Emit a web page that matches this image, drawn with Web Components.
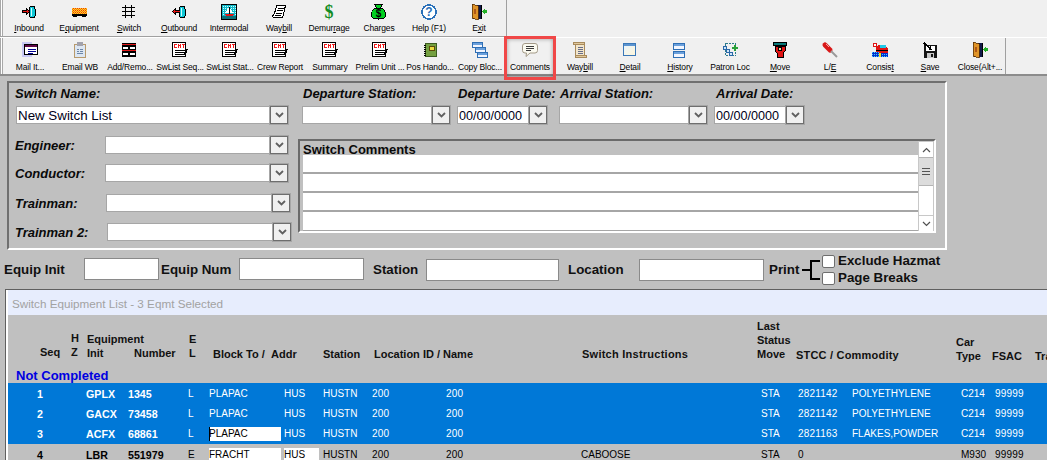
<!DOCTYPE html>
<html>
<head>
<meta charset="utf-8">
<title>Switch List</title>
<style>
  html, body { margin: 0; height: 460px; overflow: hidden; background: #c0c0c0; }
  body { font-family: "Liberation Sans", Arial, sans-serif; color: #000; display: flex; flex-direction: column; position: relative; }
</style>
</head>
<body>
<tool-strip end="507" start="4" height="37">
  <tool-button icon="inbound" label="&amp;Inbound"></tool-button>
  <tool-button icon="equipment" label="E&amp;quipment"></tool-button>
  <tool-button icon="switch" label="&amp;Switch"></tool-button>
  <tool-button icon="outbound" label="&amp;Outbound"></tool-button>
  <tool-button icon="intermodal" label="Intermodal"></tool-button>
  <tool-button icon="scrawl" label="Way&amp;bill"></tool-button>
  <tool-button icon="dollar" label="Demur&amp;rage"></tool-button>
  <tool-button icon="bag" label="Char&amp;ges"></tool-button>
  <tool-button icon="help" label="Help (F1)"></tool-button>
  <tool-button icon="door" label="E&amp;xit"></tool-button>
</tool-strip>
<tool-strip end="1006" start="5" height="39" second>
  <tool-button icon="mail" label="Mail It..."></tool-button>
  <tool-button icon="clip" label="Email WB"></tool-button>
  <tool-button icon="bricks" label="Add/Remo..."></tool-button>
  <tool-button icon="report" label="SwList Seq..."></tool-button>
  <tool-button icon="report" label="SwList Stat..."></tool-button>
  <tool-button icon="report" label="Crew Report"></tool-button>
  <tool-button icon="report" label="Summary"></tool-button>
  <tool-button icon="report" label="Prelim Unit ..."></tool-button>
  <tool-button icon="book" label="Pos Hando..."></tool-button>
  <tool-button icon="copy" label="Copy Bloc..."></tool-button>
  <tool-button icon="bubble" label="Comments"></tool-button>
  <tool-button icon="scroll" label="Way&amp;bill"></tool-button>
  <tool-button icon="detail" label="&amp;Detail"></tool-button>
  <tool-button icon="history" label="&amp;History"></tool-button>
  <tool-button icon="patron" label="Patron Loc"></tool-button>
  <tool-button icon="move" label="&amp;Move"></tool-button>
  <tool-button icon="driver" label="L/&amp;E"></tool-button>
  <tool-button icon="train" label="Consis&amp;t"></tool-button>
  <tool-button icon="save" label="&amp;Save"></tool-button>
  <tool-button icon="door" label="Close(Alt+..."></tool-button>
</tool-strip>
<mark-box></mark-box>
<switch-form></switch-form>
<filter-row></filter-row>
<equipment-list></equipment-list>

<script>
const win = (x, y, w, h, bar) => `<rect x="${x}.5" y="${y}.5" width="${w}" height="${h}" fill="#f2f6ff" stroke="#2f6fb5"/><rect x="${x + 1}" y="${y + 1}" width="${w - 1}" height="${bar}" fill="#6aa0dc"/>`
const door = `<rect x="2" y="1" width="9" height="14" fill="#101848"/><rect x="10" y="1" width="1" height="14" fill="#000"/><path d="M1 0l6 2v14l-6-2z" fill="#e09428" stroke="#5a3208" stroke-width=".8"/><rect x="3" y="5" width="2" height="5" fill="#b05818"/><path d="M11 7l3-3v2h2v3h-2v2z" fill="#24b028"/>`
const report = `<rect x="0.5" y="0.5" width="13" height="14" fill="#fff" stroke="#000"/><path d="M2 2h3v1H3v2h2v1H2zM6 2h1v4H6zM8 2h1v4H8zM6 3h3v1H6zM10 2h3v1h-1v3h-1V3h-1z" fill="#f01818"/><rect x="3" y="8" width="12" height="1" fill="#000"/><rect x="3" y="10" width="12" height="1" fill="#000"/><rect x="3" y="12" width="10" height="1" fill="#000"/><rect x="14" y="7" width="2" height="1" fill="#000"/><rect x="13" y="9" width="2" height="1" fill="#000"/><rect x="12" y="11" width="2" height="1" fill="#000"/>`

const ICONS = {
  inbound: `<rect x="8.5" y="2.5" width="5.5" height="11" rx="2" fill="#10c8d8" stroke="#000"/><rect x="10" y="4" width="1" height="8" fill="#c8ffff"/><path d="M1 6h4V4l4 3.5L5 11V9H1z" fill="#000"/><path d="M2 7h4V6l2 1.5L6 9V8H2z" fill="#e41414"/>`,
  outbound: `<rect x="8.5" y="2.5" width="5.5" height="11" rx="2" fill="#10c8d8" stroke="#000"/><rect x="10" y="4" width="1" height="8" fill="#c8ffff"/><path d="M9 6H5V4L1 7.5 5 11V9h4z" fill="#000"/><path d="M9 7H4V6L2 7.5 4 9V8h5z" fill="#e41414"/>`,
  equipment: `<defs><pattern id="ck" width="2" height="2" patternUnits="userSpaceOnUse"><rect width="2" height="2" fill="#ffd820"/><rect width="1" height="1" fill="#f03010"/><rect x="1" y="1" width="1" height="1" fill="#f07010"/></pattern></defs><rect x="1" y="4" width="15" height="6" fill="url(#ck)"/><rect x="1" y="10" width="15" height="1.5" fill="#000"/><rect x="2" y="11" width="4" height="2" fill="#000"/><rect x="11" y="11" width="4" height="2" fill="#000"/>`,
  switch: `<path d="M4.5 1v13M10.5 1v13M1 3.500h13M1 7.500h13M1 11.500h13" stroke="#000" fill="none"/>`,
  intermodal: `<defs><pattern id="dt" width="2" height="2" patternUnits="userSpaceOnUse"><rect width="2" height="2" fill="#10b8c8"/><rect width="1" height="1" fill="#c8ffff"/></pattern></defs><rect x=".5" y=".5" width="15" height="15" fill="url(#dt)" stroke="#000"/><path d="M8 3l4 6H4z" fill="#fff"/><rect x="8" y="3" width="1" height="7" fill="#000"/><path d="M3 10h10l-2 2H5z" fill="#e01414"/><rect x="1" y="12" width="14" height="3" fill="#087078"/>`,
  scrawl: `<path d="M6 1.500h8.500l-2 8.500-1 3.500H2.500L1.500 12l2-2.500 1-4z" fill="#fff" stroke="#000" stroke-linejoin="round"/><path d="M6.500 4h6M6 6.500h6M5 9h6M4 11.500h6" stroke="#000" fill="none"/>`,
  dollar: `<text x="8" y="14" text-anchor="middle" font-family="Liberation Serif" font-weight="700" font-size="18" fill="#128c24">$</text>`,
  bag: `<path d="M4 .5h7L9.500 4c3 1 5.500 4 5.500 7 0 3-2 4-7.500 4S0 14 0 11c0-3 2.500-6 5.500-7z" fill="#00d020" stroke="#000"/><rect x="5" y="3.500" width="5" height="1" fill="#000"/><text x="7.500" y="13" text-anchor="middle" font-family="Liberation Sans" font-weight="700" font-size="10" fill="#000">$</text>`,
  help: `<circle cx="8" cy="8" r="7" fill="#fff" stroke="#2a70b8" stroke-width="1.700"/><text x="8" y="12.200" text-anchor="middle" font-family="Liberation Sans" font-weight="700" font-size="12" fill="#2a70b8">?</text>`,
  door,
  mail: `<rect x="0" y="0" width="10" height="15" fill="#c8c8f4"/><rect x="2.500" y="2.500" width="13" height="10" fill="#fff" stroke="#000"/><rect x="3" y="3" width="12" height="2" fill="#600848"/><rect x="6" y="7" width="8" height="1" fill="#000090"/><rect x="6" y="9" width="8" height="1" fill="#000090"/><rect x="6" y="11" width="5" height="1" fill="#000090"/>`,
  clip: `<rect x="2.500" y="2.500" width="11" height="13" rx="1" fill="#dce6f2" stroke="#b89a6c"/><rect x="5" y="0" width="6" height="4" fill="#a2a2ac"/><rect x="5" y="7" width="2" height="1" fill="#6c86a8"/><rect x="8" y="7" width="3" height="1" fill="#6c86a8"/><rect x="5" y="9" width="2" height="1" fill="#6c86a8"/><rect x="8" y="9" width="3" height="1" fill="#6c86a8"/><rect x="5" y="11" width="6" height="1" fill="#6c86a8"/>`,
  bricks: `<rect x="0" y="1" width="14" height="14" fill="#000"/><rect x="0" y="2" width="14" height="1" fill="#e01818"/><rect x="1" y="5" width="5" height="2" fill="#fff"/><rect x="8" y="5" width="5" height="2" fill="#fff"/><rect x="0" y="8" width="14" height="1" fill="#e01818"/><rect x="1" y="11" width="5" height="2" fill="#fff"/><rect x="8" y="11" width="5" height="2" fill="#fff"/>`,
  report,
  book: `<rect x="3.500" y="1.500" width="11" height="13" fill="#74a040" stroke="#3c5c20"/><path d="M2 3h2M2 5h2M2 7h2M2 9h2M2 11h2M2 13h2" stroke="#000"/><rect x="7.500" y="4.500" width="5" height="4" fill="#ecdc40" stroke="#5c4a08"/>`,
  copy: win(0, 0, 10, 5, 2) + win(3, 5, 10, 5, 2) + win(5, 10, 10, 5, 2),
  bubble: `<path d="M3 1.500h10q2.500 0 2.500 2.500v4.500q0 2.500-2.500 2.500H8l-4 3.500.5-3.500H3Q.5 11 .5 8.500V4Q.5 1.500 3 1.500z" fill="#fbfaf0" stroke="#a39a88" shape-rendering="auto"/><path d="M4 4.500h8M4 6.500h8M4 8.500h5" stroke="#3c3c3c" fill="none"/>`,
  scroll: `<rect x="3.500" y="1.500" width="9" height="13" fill="#f2e6cc" stroke="#a88a5c"/><rect x="1.500" y="0.500" width="11" height="2" fill="#e0c89c" stroke="#a88a5c"/><rect x="3.500" y="13.500" width="11" height="2" fill="#e0c89c" stroke="#a88a5c"/><path d="M6 5h5M6 7h5M6 9h5M6 11h5" stroke="#666c88" fill="none"/>`,
  detail: `<defs><linearGradient id="dg" x1="0" y1="0" x2="1" y2="1"><stop offset="0" stop-color="#e8f4ff"/><stop offset="1" stop-color="#fff6d8"/></linearGradient></defs><rect x="1.500" y="1.500" width="12" height="12" fill="url(#dg)" stroke="#3a78b8"/><rect x="2" y="2" width="11" height="2" fill="#5c94d0"/>`,
  history: win(1, 1, 11, 6, 2) + win(1, 9, 11, 6, 2),
  patron: `<rect x="3.500" y="1.500" width="10" height="12" fill="none" stroke="#2c7a8c" stroke-dasharray="2 1"/><rect x="1.500" y="4.500" width="3" height="3" fill="#cfe6f8" stroke="#2a68a8"/><rect x="4.500" y="7.500" width="3" height="3" fill="#cfe6f8" stroke="#2a68a8"/><rect x="7.500" y="10.500" width="3" height="3" fill="#cfe6f8" stroke="#2a68a8"/><path d="M10 5h2V3h2v2h2v2h-2v2h-2V7h-2z" fill="#28a038"/>`,
  move: `<path d="M3 4h10v5l-2 2v4H5v-4L3 9z" fill="#e01414" stroke="#000"/><rect x="1.500" y=".5" width="13" height="3" fill="#087878" stroke="#000"/><circle cx="8" cy="7" r="2" fill="#f8d8a0" stroke="#000"/>`,
  driver: `<path d="M3 3l5 5" stroke="#d81818" stroke-width="5" stroke-linecap="round" shape-rendering="auto"/><path d="M4 2l3 3" stroke="#f8a0a0" shape-rendering="auto"/><path d="M9 9l6 6" stroke="#9a9a9a" stroke-width="2" shape-rendering="auto"/>`,
  train: `<defs><pattern id="tk" width="2" height="2" patternUnits="userSpaceOnUse"><rect width="2" height="2" fill="#0030d0"/><rect width="1" height="1" fill="#40c8ff"/></pattern></defs><rect x="1" y="1" width="3" height="3" fill="#fff" stroke="#e01414"/><path d="M6 3h7l3 4v4H4V6z" fill="#e01414"/><rect x="8" y="3" width="6" height="3" fill="#20c8e8"/><rect x="4" y="8" width="12" height="1" fill="#000"/><rect x="0" y="10" width="7" height="5" fill="url(#tk)"/><rect x="7" y="11" width="2" height="4" fill="#f0e020"/><rect x="9" y="11" width="7" height="4" fill="url(#tk)"/>`,
  save: `<rect x="2" y="3" width="13" height="13" fill="#141414"/><rect x="4" y="4" width="9" height="5" fill="#fff"/><rect x="5" y="11" width="7" height="5" fill="#c8c8c8"/><rect x="9" y="12" width="2" height="3" fill="#141414"/><path d="M2 0l6 5V2l2 6-6-1 3-.5L1 1.500z" fill="#000"/>`
}

// one icon + caption, "&" in the label marks the underlined mnemonic
class ToolButton extends HTMLElement {
  constructor () {
    super()
    this.attachShadow({ mode: 'open' })
  }
  connectedCallback () {
    const label = (this.getAttribute('label') || '').replace(/&(.)/, '<u>$1</u>')
    this.shadowRoot.innerHTML = `
      <style>
        :host { display: flex; flex-direction: column; align-items: center; width: 50px; flex: none; }
        svg { width: 16px; height: 16px; display: block; shape-rendering: crispEdges; overflow: visible; }
        span { font: 8.5px/10px "Liberation Sans", Arial, sans-serif; letter-spacing: -.15px; color: #000; white-space: nowrap; margin-top: var(--cap-gap, 3px); }
        u { text-underline-offset: 1px; }
      </style>
      <svg viewBox="0 0 16 16">${ICONS[this.getAttribute('icon')] || ''}</svg>
      <span>${label}</span>`
  }
}
customElements.define('tool-button', ToolButton)

class ToolStrip extends HTMLElement {
  constructor () {
    super()
    this.attachShadow({ mode: 'open' })
  }
  connectedCallback () {
    const end = this.getAttribute('end')
    const start = this.getAttribute('start') - 0
    const second = this.hasAttribute('second')
    const top = 4
    this.shadowRoot.innerHTML = `
      <style>
        :host { display: block; flex: none; height: ${this.getAttribute('height')}px; background: #f0f0f0; box-sizing: border-box;
          ${second ? 'border-top: 1px solid #fff; border-bottom: 2px solid #8c8c8c;' : ''} }
        .bar { display: flex; width: ${end}px; height: 100%; box-sizing: border-box;
          padding-top: ${top}px; border-right: 1px solid #a0a0a0;
          ${second ? '--cap-gap: 4px;' : 'border-bottom: 1px solid #a0a0a0; --cap-gap: 3px;'} }
        .grip { width: 1px; border-left: 1px solid #a8a8a8; border-right: 1px solid #a8a8a8; margin: -${top}px ${start - 3}px 0 0; flex: none; background: #fff; }
      </style>
      <div class="bar"><div class="grip"></div><slot></slot></div>`
  }
}
customElements.define('tool-strip', ToolStrip)

// red call-out drawn over the Comments button
class MarkBox extends HTMLElement {
  constructor () {
    super()
    this.attachShadow({ mode: 'open' }).innerHTML = `
      <style>
        :host { position: absolute; left: 504px; top: 36px; width: 52px; height: 44px; box-sizing: border-box;
          border: 3px solid #f04848; box-shadow: inset 0 0 4px rgba(0,0,0,.35); pointer-events: none; }
      </style>`
  }
}
customElements.define('mark-box', MarkBox)

class ComboBox extends HTMLElement {
  constructor () {
    super()
    this.attachShadow({ mode: 'open' })
  }
  connectedCallback () {
    const v = this.getAttribute('value') || ''
    this.shadowRoot.innerHTML = `
      <style>
        :host { display: flex; flex: none; height: 18px; width: ${this.getAttribute('width')}px; }
        .val { flex: 1; background: #fff; border: 1px solid #a6a6a6; border-right: 0; box-sizing: border-box; font: ${this.getAttribute('size') || 13.33}px/18px "Liberation Sans", Arial, sans-serif; color: #000018; padding-left: 1px; overflow: hidden; white-space: nowrap; }
        .btn { width: 18px; flex: none; box-sizing: border-box; border: 1px solid #6e6e6e; outline: 1px solid #a6a6a6; background: #f0f0f0; display: flex; align-items: center; justify-content: center; }
        svg { width: 9px; height: 6px; display: block; }
      </style>
      <div class="val">${v}</div>
      <div class="btn"><svg viewBox="0 0 9 6"><path d="M1 1l3.500 3.500L8 1" fill="none" stroke="#606060" stroke-width="1.800"/></svg></div>`
  }
}
customElements.define('combo-box', ComboBox)

class CommentsBox extends HTMLElement {
  constructor () {
    super()
    this.attachShadow({ mode: 'open' }).innerHTML = `
      <style>
        :host { display: flex; flex: none; width: 638px; height: 94px; box-sizing: border-box; margin: 3px 0 0 7px;
          border: 2px solid; border-color: #6a6a6a #fff #fff #6a6a6a; padding-left: 3px; }
        .main { flex: 1; display: flex; flex-direction: column; }
        h4 { margin: 0; font: 700 13px/18px "Liberation Sans", Arial, sans-serif; height: 14px; }
        .line { height: 17px; background: #fff; border-bottom: 2px solid #a6a6a6; }
        .line:last-child { border-bottom: 1px solid #a6a6a6; height: 18px; }
        .bar { width: 16px; flex: none; background: #fff; display: flex; flex-direction: column; box-sizing: border-box; border: 1px solid #c8c8c8; border-bottom: 0;  }
        .arrow { height: 15px; display: flex; align-items: center; justify-content: center; }
        .thumb { height: 27px; background: #dcdcdc; border: 1px solid #b4b4b4; border-width: 1px 0; display: flex; align-items: center; justify-content: center; }
        .track { flex: 1; }
        .down { border-top: 1px solid #c8c8c8; }
        svg { display: block; }
      </style>
      <div class="main">
        <h4>Switch Comments</h4>
        <div class="line"></div><div class="line"></div><div class="line"></div><div class="line"></div>
      </div>
      <div class="bar">
        <div class="arrow"><svg width="9" height="6" viewBox="0 0 9 6"><path d="M1 5l3.500-3.500L8 5" fill="none" stroke="#505050" stroke-width="1.200"/></svg></div>
        <div class="thumb"><svg width="8" height="7" viewBox="0 0 8 7"><path d="M0 .5h8M0 3.500h8M0 6.500h8" stroke="#555"/></svg></div>
        <div class="track"></div>
        <div class="arrow down"><svg width="9" height="6" viewBox="0 0 9 6"><path d="M1 1l3.500 3.500L8 1" fill="none" stroke="#505050" stroke-width="1.200"/></svg></div>
      </div>`
  }
}
customElements.define('comments-box', CommentsBox)

class SwitchForm extends HTMLElement {
  constructor () {
    super()
    this.attachShadow({ mode: 'open' }).innerHTML = `
      <style>
        :host { display: block; flex: none; width: 940px; height: 169px; margin: 5px 0 0 7px; box-sizing: border-box;
          border: 2px solid; border-color: #707070 #fff #fff #707070; padding: 3px 0 0 7px; font: italic 700 13px/15px "Liberation Sans", Arial, sans-serif; color: #0a0a0a; }
        .top { display: flex; }
        .field { display: flex; flex-direction: column; gap: 5px; }
        .field b { white-space: nowrap; width: 0; }
        .lower { display: flex; margin-top: 12px; }
        .col { width: 275px; flex: none; display: flex; flex-direction: column; }
        .row { display: flex; align-items: center; height: 18px; }
        .row b { margin-left: -1px; white-space: nowrap; }
      </style>
      <div class="top">
        <div class="field"><b style="margin-left:-1px">Switch Name:</b><combo-box width="272" value="New Switch List"></combo-box></div>
        <div class="field" style="margin-left:14px"><b style="margin-left:1px">Departure Station:</b><combo-box width="148"></combo-box></div>
        <div class="field" style="margin-left:7px"><b style="margin-left:1px">Departure Date:</b><combo-box width="90" size="12.6" value="00/00/0000"></combo-box></div>
        <div class="field" style="margin-left:12px"><b style="margin-left:1px">Arrival Station:</b><combo-box width="148"></combo-box></div>
        <div class="field" style="margin-left:7px"><b style="margin-left:2px">Arrival Date:</b><combo-box width="90" size="12.6" value="00/00/0000"></combo-box></div>
      </div>
      <div class="lower">
        <div class="col">
          <div class="row"><b style="width:90px">Engineer:</b><combo-box width="183"></combo-box></div>
          <div class="row" style="margin-top:10px"><b style="width:90px">Conductor:</b><combo-box width="183"></combo-box></div>
          <div class="row" style="margin-top:12px"><b style="width:91px">Trainman:</b><combo-box width="184"></combo-box></div>
          <div class="row" style="margin-top:11px"><b style="width:92px">Trainman 2:</b><combo-box width="184"></combo-box></div>
        </div>
        <comments-box></comments-box>
      </div>`
  }
}
customElements.define('switch-form', SwitchForm)

class FilterRow extends HTMLElement {
  constructor () {
    super()
    this.attachShadow({ mode: 'open' }).innerHTML = `
      <style>
        :host { display: grid; flex: none; height: 39px; box-sizing: border-box; align-items: center;
          grid-template-columns: 80px 75px 80px 125px 62px 133px 80px 125px 38px 20px auto; padding-left: 4px;
          font: 700 13.33px/16px "Liberation Sans", Arial, sans-serif; color: #101010; }
        span { white-space: nowrap; }
        .sp { padding-left: 2px; }
        .in { height: 22px; box-sizing: border-box; background: #fff; border: 1px solid #8a8a8a; }
        .hi { margin-top: -2px; }
        .checks { display: grid; grid-template-columns: 13px auto; column-gap: 3px; row-gap: 1px; align-items: center; }
        .checks i { width: 13px; height: 13px; box-sizing: border-box; background: #fff; border: 1px solid #6e6e6e; border-radius: 2px; display: block; }
        svg { display: block; margin-top: 1px; }
      </style>
      <span>Equip Init</span><div class="in hi"></div>
      <span class="sp">Equip Num</span><div class="in hi"></div>
      <span style="padding-left:9px">Station</span><div class="in"></div>
      <span style="padding-left:9px">Location</span><div class="in"></div>
      <span style="padding-left:5px">Print</span>
      <svg width="20" height="22" viewBox="0 0 20 22" shape-rendering="crispEdges"><path d="M0 10h9v2H0zM8 1h2v20H8zM8 1h10v2H8zM8 19h10v2H8z" fill="#000"/></svg>
      <div class="checks"><i></i><span>Exclude Hazmat</span><i></i><span>Page Breaks</span></div>`
  }
}
customElements.define('filter-row', FilterRow)

// column tracks shared by the heading row and the data rows
const TRACKS = '29px 34px 15px 42px 60px 21px 75px 39px 49px 74px 135px 180px 37px 54px 109px 34px 40px 60px'

class ListHead extends HTMLElement {
  constructor () {
    super()
    const cell = (col, x, pb, html, extra = '') => `<div style="grid-column:${col};margin-left:${x}px;padding-bottom:${pb}px;${extra}">${html}</div>`
    this.attachShadow({ mode: 'open' }).innerHTML = `
      <style>
        :host { display: grid; grid-template-columns: ${TRACKS}; height: 49px; align-items: end; font: 700 11px/14px "Liberation Sans", Arial, sans-serif; color: #111; }
        div { grid-row: 1; white-space: nowrap; }
      </style>
      ${cell(2, 3, 5, 'Seq')}
      ${cell(3, 0, 5, 'H<br>Z')}
      ${cell(4, 1, 4, 'Equipment<br>Init')}
      ${cell(5, 6, 4, 'Number')}
      ${cell(6, 1, 4, 'E<br>L')}
      ${cell(7, 4, 3, 'Block To /')}
      ${cell(7, 62, 3, 'Addr')}
      ${cell(9, 0, 3, 'Station')}
      ${cell(10, 2, 3, 'Location ID / Name')}
      ${cell(12, 1, 3, 'Switch Instructions', 'letter-spacing:.25px;')}
      ${cell(13, -4, 3, 'Last<br>Status<br>Move')}
      ${cell(14, -2, 2, 'STCC / Commodity', 'letter-spacing:.2px;')}
      ${cell(16, -5, 1, 'Car<br>Type')}
      ${cell(17, -3, 1, 'FSAC')}
      ${cell(18, 0, 1, 'Tra')}`
  }
}
customElements.define('list-head', ListHead)

class ListRow extends HTMLElement {
  constructor () {
    super()
    this.attachShadow({ mode: 'open' })
  }
  connectedCallback () {
    const c = this.getAttribute('cells').split('|')
    const sel = this.hasAttribute('selected')
    const edit = (this.getAttribute('edit') || '').split(',')
    const caret = this.hasAttribute('caret')
    // columns: seq, init, number, e/l, block, addr, station, loc id, loc name, instr, status, stcc, commodity, type, fsac
    const cols = [2, 4, 5, 6, 7, 8, 9, 10, 11, 12, 13, 14, 15, 16, 17]
    const bold = [0, 1, 2]
    const digits = [7, 8, 11, 14]
    const html = c.map((t, i) => {
      const cls = [bold.includes(i) ? 'b' : '', digits.includes(i) ? 'd' : '', edit.includes(String(i)) ? 'edit' : '', caret && i === 4 ? 'caret' : '', i === 5 ? 'addr' : ''].join(' ')
      return t ? `<div class="${cls}" style="grid-column:${cols[i]}">${t}</div>` : ''
    }).join('')
    this.shadowRoot.innerHTML = `
      <style>
        :host { display: grid; grid-template-columns: ${TRACKS}; height: ${this.getAttribute('h') || 20}px; align-items: center; box-sizing: border-box; padding-top: 1px;
          font: 10px/14px "Liberation Sans", Arial, sans-serif; ${sel ? 'background: #0078d7; color: #fff;' : 'color: #000;'} }
        div { white-space: nowrap; grid-row: 1; }
        .b { font-weight: 700; font-size: 10.67px; }
        .d { letter-spacing: .2px; }
        .edit { background: #fff; color: #000; margin-right: 3px; height: 14px; }
        .addr.edit { margin-right: 4px; }
        .caret { box-shadow: inset 1px 0 #000; }
      </style>
      ${html}`
  }
}
customElements.define('list-row', ListRow)

class EquipmentList extends HTMLElement {
  constructor () {
    super()
    this.attachShadow({ mode: 'open' }).innerHTML = `
      <style>
        :host { display: block; flex: 1; min-height: 0; margin-left: 5px; border-top: 1px solid #606060; border-left: 1px solid #606060; overflow: hidden; }
        .in { border-left: 2px solid #fff; height: 100%; }
        .title { height: 25px; background: #e7edfd; color: #a2a2a2; font: 11.7px/27px "Liberation Sans", Arial, sans-serif; padding-left: 4px; }
        .group { height: 19px; box-sizing: border-box; padding: 5px 0 0 8px; font: 700 13px/14px "Liberation Sans", Arial, sans-serif; color: #0000e0; }
      </style>
      <div class="in">
        <div class="title">Switch Equipment List - 3 Eqmt Selected</div>
        <list-head></list-head>
        <div class="group">Not Completed</div>
        <list-row selected cells="1|GPLX|1345|L|PLAPAC|HUS|HUSTN|200|200||STA|2821142|POLYETHYLENE|C214|99999"></list-row>
        <list-row selected cells="2|GACX|73458|L|PLAPAC|HUS|HUSTN|200|200||STA|2821142|POLYETHYLENE|C214|99999"></list-row>
        <list-row selected h="21" edit="4" caret cells="3|ACFX|68861|L|PLAPAC|HUS|HUSTN|200|200||STA|2821163|FLAKES,POWDER|C214|99999"></list-row>
        <list-row edit="4,5" cells="4|LBR|551979|E|FRACHT|HUS|HUSTN|200|200|CABOOSE|STA|0||M930|99999"></list-row>
      </div>`
  }
}
customElements.define('equipment-list', EquipmentList)
</script>
</body>
</html>
